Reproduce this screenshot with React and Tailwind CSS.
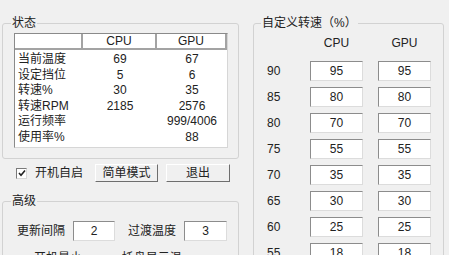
import React from "react";

const statusRows = [
    { label: "当前温度", cpu: "69", gpu: "67" },
    { label: "设定挡位", cpu: "5", gpu: "6" },
    { label: "转速%", cpu: "30", gpu: "35" },
    { label: "转速RPM", cpu: "2185", gpu: "2576" },
    { label: "运行频率", cpu: "", gpu: "999/4006" },
    { label: "使用率%", cpu: "", gpu: "88" },
];

const speedRows = [
    { temp: "90", cpu: "95", gpu: "95" },
    { temp: "85", cpu: "80", gpu: "80" },
    { temp: "80", cpu: "70", gpu: "70" },
    { temp: "75", cpu: "55", gpu: "55" },
    { temp: "70", cpu: "35", gpu: "35" },
    { temp: "65", cpu: "30", gpu: "30" },
    { temp: "60", cpu: "25", gpu: "25" },
    { temp: "55", cpu: "18", gpu: "18" },
    { temp: "50", cpu: "10", gpu: "10" },
];

// Classic sunken edit box
const Field = ({ value, className = "" }) => (
    <div
        className={`h-[20px] bg-white border border-t-[#8c8c8c] border-l-[#8c8c8c] border-r-[#dcdcdc] border-b-[#dcdcdc] flex items-center justify-center leading-none ${className}`}
    >
        {value}
    </div>
);

const CheckBox = ({ checked }) => (
    <span className="w-[11px] h-[11px] bg-white border border-t-[#7a7a7a] border-l-[#7a7a7a] border-r-[#d8d8d8] border-b-[#d8d8d8] flex items-center justify-center shrink-0">
        {checked && (
            <svg width="8" height="8" viewBox="0 0 8 8">
                <path d="M1 4 L3 6.2 L7 1.5" fill="none" stroke="#222" strokeWidth="1.6" />
            </svg>
        )}
    </span>
);

const Button = ({ children, className = "" }) => (
    <div
        className={`h-[18px] flex items-center justify-center bg-[#f0f0f0] border border-t-[#ffffff] border-l-[#ffffff] border-r-[#6e6e6e] border-b-[#6e6e6e] ${className}`}
    >
        {children}
    </div>
);

export default function App() {
    return (
        <div className="w-[449px] h-[255px] overflow-hidden bg-[#f0f0f0] text-[12px] text-[#222] font-['Liberation_Sans','Noto_Sans_CJK_SC',sans-serif] flex items-start pt-[15px] pl-[2px] gap-[14px]">
            {/* Left column */}
            <div className="w-[237px] flex flex-col">
                <fieldset className="border border-[#d2d2d2] rounded-[3px] pb-[10px]">
                    <legend className="ml-[8px] px-[1px] leading-[16px]">状态</legend>
                    <div className="mt-[2px] ml-[11px] w-[214px] h-[115px] bg-white border border-t-[#8a8a8a] border-l-[#8a8a8a] border-r-[#d6d6d6] border-b-[#d6d6d6]">
                        <div className="grid grid-cols-[68px_74px_70px] h-[16px]">
                            <div className="border-r-2 border-b-2 border-[#a3a3a3]" />
                            <div className="border-r-2 border-b-2 border-[#a3a3a3] flex items-center justify-center leading-none">CPU</div>
                            <div className="border-r-2 border-b-2 border-[#a3a3a3] flex items-center justify-center leading-none">GPU</div>
                        </div>
                        <div className="pt-[2px]">
                            {statusRows.map((row) => (
                                <div key={row.label} className="grid grid-cols-[68px_74px_70px] h-[15.6px] leading-[15.6px]">
                                    <div className="pl-[3px]">{row.label}</div>
                                    <div className="text-center">{row.cpu}</div>
                                    <div className="text-center">{row.gpu}</div>
                                </div>
                            ))}
                        </div>
                    </div>
                </fieldset>

                <div className="mt-[5px] h-[18px] flex items-center">
                    <div className="ml-[14px]">
                        <CheckBox checked />
                    </div>
                    <span className="ml-[8px] w-[48px]">开机自启</span>
                    <Button className="ml-[12px] w-[63px]">简单模式</Button>
                    <Button className="ml-[8px] w-[64px]">退出</Button>
                </div>

                <fieldset className="mt-[11px] border border-[#d2d2d2] rounded-[3px] pb-[10px]">
                    <legend className="ml-[8px] px-[1px] leading-[16px]">高级</legend>
                    <div className="mt-[12px] pl-[14px] flex items-center">
                        <span className="w-[50px]">更新间隔</span>
                        <Field value="2" className="ml-[6px] w-[42px] h-[19px]" />
                        <span className="ml-[13px] w-[50px]">过渡温度</span>
                        <Field value="3" className="ml-[6px] w-[43px] h-[19px]" />
                    </div>
                    <div className="mt-[8px] pl-[14px] flex items-center">
                        <CheckBox />
                        <span className="ml-[6px]">开机最小化</span>
                        <div className="ml-[14px]">
                            <CheckBox />
                        </div>
                        <span className="ml-[6px]">托盘显示温度</span>
                        <Button className="ml-[10px] w-[40px]">设置</Button>
                    </div>
                </fieldset>
            </div>

            {/* Right column */}
            <fieldset className="w-[191px] border border-[#d2d2d2] rounded-[3px] pb-[10px]">
                <legend className="ml-[7px] px-[1px] leading-[16px]">自定义转速（%）</legend>
                <div className="pl-[13px]">
                    <div className="mt-[4px] h-[16px] flex items-center">
                        <div className="w-[43px]" />
                        <div className="w-[53px] text-center">CPU</div>
                        <div className="ml-[15px] w-[53px] text-center">GPU</div>
                    </div>
                    <div className="mt-[10px] flex flex-col gap-[6px]">
                        {speedRows.map((row) => (
                            <div key={row.temp} className="flex items-center">
                                <div className="w-[43px]">{row.temp}</div>
                                <Field value={row.cpu} className="w-[53px]" />
                                <Field value={row.gpu} className="ml-[15px] w-[53px]" />
                            </div>
                        ))}
                    </div>
                </div>
            </fieldset>
        </div>
    );
}
